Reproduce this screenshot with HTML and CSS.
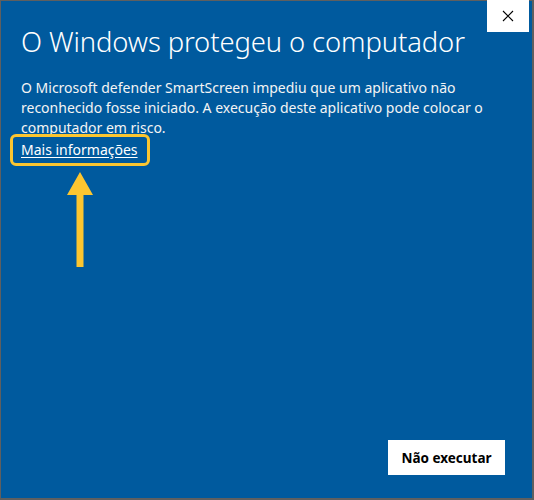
FILE: index.html
```html
<!DOCTYPE html>
<html lang="pt">
<head>
<meta charset="utf-8">
<link rel="stylesheet" href="styles.css">
</head>
<body>
<div class="window">
  <div class="titlebar">
    <button class="close" aria-label="Fechar">
      <svg width="12" height="12" viewBox="0 0 12 12"><path d="M1 1L11 11M11 1L1 11" stroke="#000" stroke-width="1.1" fill="none"/></svg>
    </button>
  </div>
  <div class="content">
    <h1 class="title">O Windows protegeu o computador</h1>
    <p class="text">O Microsoft defender SmartScreen impediu que um aplicativo não reconhecido fosse iniciado. A execução deste aplicativo pode colocar o computador em risco.</p>
    <div class="linkrow">
      <a class="more" href="#">Mais informações</a>
      <span class="highlight"></span>
      <svg class="arrow" width="30" height="96" viewBox="0 0 30 96"><path d="M15 0L28 23H18.5V95H11.5V23H2Z" fill="#fcc630"/></svg>
    </div>
  </div>
  <div class="footer">
    <button class="btn">Não executar</button>
  </div>
</div>
</body>
</html>
```
FILE: styles.css
```css
html, body { margin: 0; padding: 0; background: #5f5f5f; }
.window {
  width: 534px; height: 500px; box-sizing: border-box;
  border-top: 1px solid #5f5f5f; border-left: 1px solid #5f5f5f;
  border-right: 2px solid #5f5f5f; border-bottom: 2px solid #5f5f5f;
  background: #005a9e; display: flex; flex-direction: column;
  font-family: "Noto Sans", "Open Sans", sans-serif; color: #fff;
}
.titlebar { display: flex; justify-content: flex-end; height: 0; }
.close {
  width: 42px; height: 32px; margin: -1px 3px 0 0; padding: 0; border: 0;
  background: #fff; display: flex; align-items: center; justify-content: center;
  position: relative; z-index: 1;
}
.content { padding: 0 0 0 20px; }
.title {
  margin: 24px 0 0; font-weight: 300; font-size: 27.4px; line-height: 34px;
  letter-spacing: -0.1px; color: #fff;
}
.text { margin: 19px 0 0; font-size: 14px; line-height: 20px; width: 480px; color: #f4f4f4; }
.linkrow { position: relative; margin-top: 0; height: 22px; }
.more { color: #fff; font-size: 14px; line-height: 22px; text-decoration: underline; text-underline-offset: 2px; }
.highlight {
  position: absolute; left: -11px; top: -4px; width: 134px; height: 26px;
  border: 3px solid #fcc630; border-radius: 6px;
}
.arrow { position: absolute; left: 44px; top: 34px; }
.footer { margin-top: auto; display: flex; justify-content: flex-end; padding: 0 27px 23px 0; }
.btn {
  width: 117px; height: 35px; border: 0; background: #fff; color: #000;
  font-family: "Noto Sans", "Open Sans", sans-serif; font-weight: 700; font-size: 13.5px;
}
```
